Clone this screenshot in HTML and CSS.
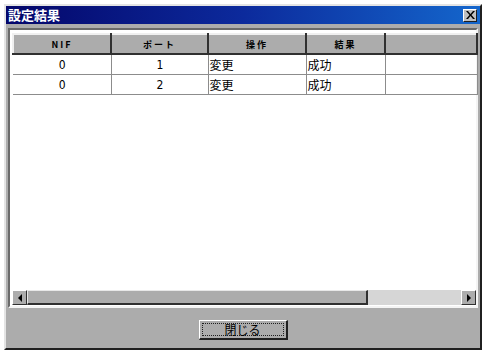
FILE: index.html
```html
<!DOCTYPE html>
<html>
  <head>
    <meta charset="utf-8" />
    <title>設定結果</title>
    <meta name="viewport" content="width=device-width, initial-scale=1" />
    <link rel="stylesheet" href="styles.css">
  </head>
  <body>
    <div class="dialog">
      <div class="titlebar">
        <span class="title">設定結果</span>
        <button class="close" type="button">
          <svg width="9" height="8" viewBox="0 0 9 8">
            <path d="M0 0h2l2.5 3 2.5-3h2L5.5 4 9 8H7L4.5 5 2 8H0l3.5-4z" fill="#000" />
          </svg>
        </button>
      </div>
      <div class="content">
        <div class="listview">
          <table class="grid">
            <colgroup>
              <col style="width: 98px" />
              <col style="width: 97px" />
              <col style="width: 98px" />
              <col style="width: 79px" />
              <col style="width: 92px" />
            </colgroup>
            <thead>
              <tr>
                <th>NIF</th>
                <th>ポート</th>
                <th>操作</th>
                <th>結果</th>
                <th></th>
              </tr>
            </thead>
            <tbody>
              <tr>
                <td class="num">0</td>
                <td class="num">1</td>
                <td>変更</td>
                <td>成功</td>
                <td></td>
              </tr>
              <tr>
                <td class="num">0</td>
                <td class="num">2</td>
                <td>変更</td>
                <td>成功</td>
                <td></td>
              </tr>
            </tbody>
          </table>
          <div class="filler"></div>
          <div class="hscroll">
            <div class="arrow left"><span class="tri-left"></span></div>
            <div class="thumb"></div>
            <div class="track"></div>
            <div class="arrow right"><span class="tri-right"></span></div>
          </div>
        </div>
        <div class="actions">
          <button class="btn" type="button"><span class="focus">閉じる</span></button>
        </div>
      </div>
    </div>
  </body>
</html>
```

FILE: styles.css
```css
body {
  margin: 0;
  padding: 4px 0 0 4px;
  background: #fff;
  font-family: "Noto Sans CJK JP", "Liberation Sans", sans-serif;
}
.dialog {
  box-sizing: border-box;
  width: 478px;
  height: 346px;
  background: #acacac;
  border-top: 2px solid #e4e4e4;
  border-left: 2px solid #e4e4e4;
  border-right: 2px solid #202020;
  border-bottom: 2px solid #202020;
  display: flex;
  flex-direction: column;
}
.titlebar {
  height: 18px;
  background: linear-gradient(to right, #04066a, #0c2a9c 50%, #1466cc);
  display: flex;
  align-items: center;
  justify-content: space-between;
  padding: 0 3px 0 2px;
}
.title {
  color: #fff;
  font-weight: bold;
  font-size: 13px;
  line-height: 18px;
}
.close {
  box-sizing: border-box;
  width: 14px;
  height: 13px;
  padding: 0;
  background: #c0c0c0;
  border-top: 1px solid #fff;
  border-left: 1px solid #fff;
  border-right: 1px solid #202020;
  border-bottom: 1px solid #202020;
  display: flex;
  align-items: center;
  justify-content: center;
}
.content {
  flex: 1;
  display: flex;
  flex-direction: column;
  padding: 4px 2px 0 2px;
}
.listview {
  box-sizing: border-box;
  height: 280px;
  background: #fff;
  border-top: 2px solid #6a6a6a;
  border-left: 2px solid #6a6a6a;
  border-right: 2px solid #f4f4f4;
  border-bottom: 2px solid #f4f4f4;
  padding: 3px 0 1px 2px;
  display: flex;
  flex-direction: column;
}
.grid {
  border-collapse: collapse;
  table-layout: fixed;
  width: 464px;
  font-size: 12px;
}
.grid th {
  box-sizing: border-box;
  height: 20px;
  padding: 0;
  background: #acacac;
  border-top: 2px solid #f0f0f0;
  border-left: 2px solid #f0f0f0;
  border-right: 2px solid #303030;
  border-bottom: 2px solid #303030;
  font-size: 9px;
  font-weight: bold;
  letter-spacing: 2px;
  color: #000;
}
.grid td {
  height: 19px;
  padding: 0 0 0 1px;
  border-right: 1px solid #8c8c8c;
  border-bottom: 1px solid #8c8c8c;
  color: #000;
  white-space: nowrap;
}
.grid td.num {
  text-align: center;
  font-family: "DejaVu Sans Condensed", "Liberation Sans", sans-serif;
  font-size: 12px;
}
.filler {
  flex: 1;
}
.hscroll {
  height: 15px;
  width: 464px;
  display: flex;
}
.arrow {
  box-sizing: border-box;
  width: 15px;
  background: #acacac;
  border-top: 1px solid #fff;
  border-left: 1px solid #fff;
  border-right: 1px solid #303030;
  border-bottom: 1px solid #303030;
  display: flex;
  align-items: center;
  justify-content: center;
}
.tri-left {
  border-top: 4px solid transparent;
  border-bottom: 4px solid transparent;
  border-right: 4px solid #000;
}
.tri-right {
  border-top: 4px solid transparent;
  border-bottom: 4px solid transparent;
  border-left: 4px solid #000;
}
.thumb {
  box-sizing: border-box;
  width: 341px;
  background: #acacac;
  border-top: 1px solid #e8e8e8;
  border-left: 1px solid #e8e8e8;
  border-right: 2px solid #303030;
  border-bottom: 2px solid #303030;
}
.track {
  flex: 1;
  background: #d6d6d6;
}
.actions {
  flex: 1;
  display: flex;
  justify-content: center;
  align-items: flex-start;
  padding-top: 12px;
}
.btn {
  box-sizing: border-box;
  width: 89px;
  height: 20px;
  padding: 2px;
  background: #acacac;
  border-top: 1px solid #fff;
  border-left: 1px solid #fff;
  border-right: 2px solid #202020;
  border-bottom: 2px solid #202020;
  display: flex;
  font-family: "Noto Sans CJK JP", sans-serif;
}
.focus {
  flex: 1;
  border: 1px dotted #202020;
  font-size: 12px;
  line-height: 12px;
  color: #000;
  text-align: center;
}
```
